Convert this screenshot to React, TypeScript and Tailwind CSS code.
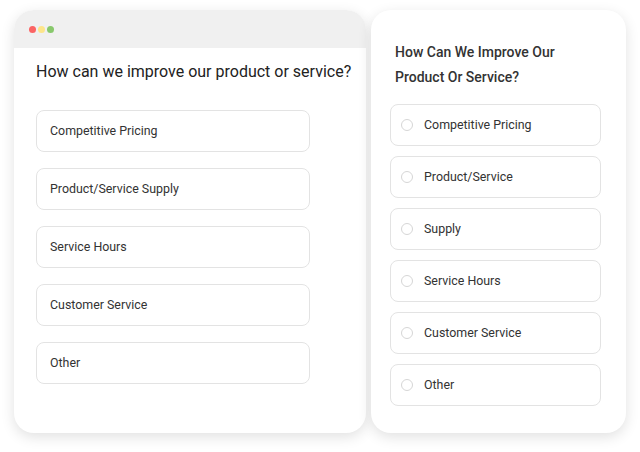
import React from "react";

const leftOptions = ["Competitive Pricing", "Product/Service Supply", "Service Hours", "Customer Service", "Other"];
const rightOptions = ["Competitive Pricing", "Product/Service", "Supply", "Service Hours", "Customer Service", "Other"];

export default function App() {
  return (
    <div
      className="w-[640px] h-[452px] bg-white flex gap-[5px] pl-[14px] pt-[10px] overflow-hidden"
      style={{ fontFamily: "Roboto, 'Liberation Sans', sans-serif" }}
    >
      <div className="w-[352px] h-[423px] bg-white rounded-[20px] overflow-hidden shadow-[0_4px_14px_rgba(0,0,0,0.12)] flex flex-col">
        <div className="h-[38px] bg-[#f0f0f0] flex items-center gap-[2px] pl-[15px] shrink-0">
          <span className="w-[7px] h-[7px] rounded-full bg-[#fb6464]" />
          <span className="w-[7px] h-[7px] rounded-full bg-[#fde58a]" />
          <span className="w-[7px] h-[7px] rounded-full bg-[#88c86c]" />
        </div>
        <div className="px-[22px] pt-[12px] flex flex-col">
          <h1 className="text-[16px] leading-[24px] text-[#222] font-normal whitespace-nowrap">
            How can we improve our product or service?
          </h1>
          <div className="mt-[26px] flex flex-col gap-[16px]">
            {leftOptions.map((o) => (
              <div
                key={o}
                className="w-[274px] h-[42px] border border-[#e3e3e3] rounded-[8px] flex items-center pl-[13px] text-[12.4px] font-normal text-[#333]"
              >
                {o}
              </div>
            ))}
          </div>
        </div>
      </div>
      <div className="w-[255px] h-[423px] bg-white rounded-[20px] shadow-[0_4px_14px_rgba(0,0,0,0.12)] pl-[19px] pr-[25px] pt-[30px] flex flex-col">
        <h2 className="pl-[5px] text-[14px] leading-[25px] text-[#333] font-medium">
          How Can We Improve Our
          <br />
          Product Or Service?
        </h2>
        <div className="mt-[14px] flex flex-col gap-[10px]">
          {rightOptions.map((o) => (
            <div
              key={o}
              className="w-[211px] h-[42px] border border-[#e3e3e3] rounded-[8px] flex items-center pl-[10px] text-[12.4px] font-normal text-[#333]"
            >
              <span className="w-[12px] h-[12px] rounded-full border border-[#d6d6d6] shrink-0" />
              <span className="ml-[11px]">{o}</span>
            </div>
          ))}
        </div>
      </div>
    </div>
  );
}
